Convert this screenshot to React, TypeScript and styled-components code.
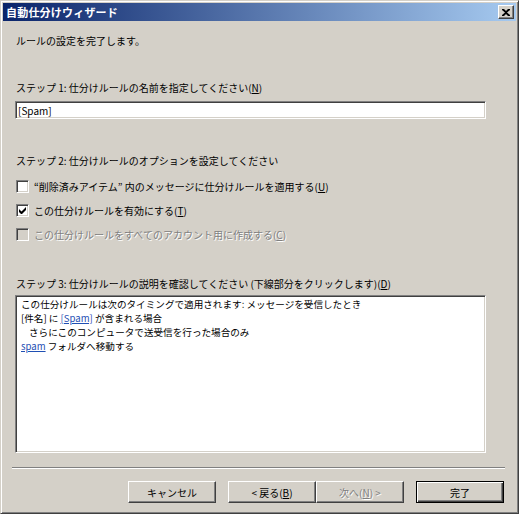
import React from 'react';
import styled, { createGlobalStyle } from 'styled-components';

const Colors = {
  face: '#d4d0c8',
  highlight: '#ffffff',
  shadow: '#808080',
  darkShadow: '#404040',
  text: '#000000',
  disabled: '#808080',
  link: '#1f4fb4',
  titleFrom: '#0a246a',
  titleTo: '#a6caf0',
};

const GlobalStyle = createGlobalStyle`
  html, body {
    margin: 0;
    padding: 0;
    background: ${Colors.face};
  }
  body {
    font-family: 'Noto Sans CJK JP', 'Noto Sans', sans-serif;
    font-size: 10px;
    color: ${Colors.text};
  }
`;

const App = () => {
  return (
    <>
      <GlobalStyle />
      <Window>
        <TitleBar>
          <Title>自動仕分けウィザード</Title>
          <CloseButton aria-label="閉じる">
            <svg width="8" height="7" viewBox="0 0 8 7">
              <path
                d="M0 0h2l2 2 2-2h2v1L5 3.5 8 6v1H6L4 5 2 7H0V6l3-2.5L0 1z"
                fill="#000"
              />
            </svg>
          </CloseButton>
        </TitleBar>

        <Content>
          <Label $top={13}>ルールの設定を完了します。</Label>

          <Label $top={33}>
            ステップ 1: 仕分けルールの名前を指定してください(<Key>N</Key>)
          </Label>
          <TextBox defaultValue="[Spam]" />

          <Label $top={35}>ステップ 2: 仕分けルールのオプションを設定してください</Label>
          <Options>
            <Option>
              <Box />
              <span>
                “削除済みアイテム” 内のメッセージに仕分けルールを適用する(<Key>U</Key>)
              </span>
            </Option>
            <Option>
              <Box>
                <svg width="7" height="7" viewBox="0 0 7 7">
                  <path d="M0 2v3l2 2h1l4-4V0L2.5 4.5z" fill="#000" />
                </svg>
              </Box>
              <span>
                この仕分けルールを有効にする(<Key>T</Key>)
              </span>
            </Option>
            <Option $disabled>
              <Box $disabled />
              <span>
                この仕分けルールをすべてのアカウント用に作成する(<Key>C</Key>)
              </span>
            </Option>
          </Options>

          <Label $top={31}>
            ステップ 3: 仕分けルールの説明を確認してください (下線部分をクリックします)(<Key>D</Key>)
          </Label>
          <Description>
            <Line>この仕分けルールは次のタイミングで適用されます: メッセージを受信したとき</Line>
            <Line>
              [件名] に <Link>[Spam]</Link> が含まれる場合
            </Line>
            <Line $indent>さらにこのコンピュータで送受信を行った場合のみ</Line>
            <Line>
              <Link>spam</Link> フォルダへ移動する
            </Line>
          </Description>
        </Content>

        <Separator />

        <ButtonRow>
          <Button>キャンセル</Button>
          <ButtonPair>
            <Button>
              &lt; 戻る(<Key>B</Key>)
            </Button>
            <Button disabled>
              次へ(<Key>N</Key>) &gt;
            </Button>
          </ButtonPair>
          <Button $default>完了</Button>
        </ButtonRow>
      </Window>
    </>
  );
};

const Window = styled.div`
  width: 519px;
  height: 514px;
  box-sizing: border-box;
  display: flex;
  flex-flow: column;
  background: ${Colors.face};
  border: 1px solid;
  border-color: ${Colors.face} ${Colors.darkShadow} ${Colors.darkShadow} ${Colors.face};
  box-shadow: inset 1px 1px ${Colors.highlight}, inset -1px -1px ${Colors.shadow};
  padding: 2px;
`;

const TitleBar = styled.div`
  height: 18px;
  flex-shrink: 0;
  display: flex;
  align-items: center;
  padding: 0 2px 0 3px;
  background: linear-gradient(to right, ${Colors.titleFrom}, ${Colors.titleTo});
`;

const Title = styled.div`
  color: #fff;
  font-weight: bold;
  font-size: 11px;
  letter-spacing: 0.2px;
  line-height: 18px;
`;

const CloseButton = styled.div`
  margin-left: auto;
  width: 16px;
  height: 14px;
  box-sizing: border-box;
  display: flex;
  align-items: center;
  justify-content: center;
  background: ${Colors.face};
  border: 1px solid;
  border-color: ${Colors.highlight} ${Colors.darkShadow} ${Colors.darkShadow} ${Colors.highlight};
  box-shadow: inset -1px -1px ${Colors.shadow};
`;

const Content = styled.div`
  display: flex;
  flex-flow: column;
  padding: 0 0 0 12px;
`;

const Label = styled.div<{ $top: number }>`
  margin-top: ${(p) => p.$top}px;
  margin-left: 1px;
  line-height: 14px;
  height: 14px;
  white-space: nowrap;
`;

const Key = styled.span`
  text-decoration: underline;
`;

const sunken = `
  box-sizing: border-box;
  border: 1px solid;
  border-color: ${Colors.shadow} ${Colors.highlight} ${Colors.highlight} ${Colors.shadow};
  box-shadow: inset 1px 1px ${Colors.darkShadow}, inset -1px -1px ${Colors.face};
`;

const TextBox = styled.input`
  ${sunken}
  margin-top: 6px;
  width: 471px;
  height: 18px;
  padding: 0 0 0 2px;
  background: #fff;
  font: inherit;
  color: ${Colors.text};
  outline: none;
`;

const Options = styled.div`
  margin-top: 6px;
  display: flex;
  flex-flow: column;
`;

const Option = styled.label<{ $disabled?: boolean }>`
  height: 24px;
  display: flex;
  align-items: center;
  gap: 5px;
  padding-left: 1px;
  white-space: nowrap;
  color: ${(p) => (p.$disabled ? Colors.disabled : Colors.text)};
  text-shadow: ${(p) => (p.$disabled ? `1px 1px 0 ${Colors.highlight}` : 'none')};
`;

const Box = styled.span<{ $disabled?: boolean }>`
  ${sunken}
  width: 13px;
  height: 13px;
  flex-shrink: 0;
  display: flex;
  align-items: center;
  justify-content: center;
  background: ${(p) => (p.$disabled ? Colors.face : '#fff')};
`;

const Description = styled.div`
  ${sunken}
  margin-top: 4px;
  width: 471px;
  height: 158px;
  padding: 2px 5px;
  background: #fff;
  font-size: 9.6px;
`;

const Line = styled.div<{ $indent?: boolean }>`
  line-height: 13.9px;
  height: 13.9px;
  white-space: nowrap;
  padding-left: ${(p) => (p.$indent ? 8 : 0)}px;
`;

const Link = styled.span`
  color: ${Colors.link};
  text-decoration: underline;
`;

const Separator = styled.div`
  margin: 14px 11px 0 9px;
  border-top: 1px solid ${Colors.shadow};
  border-bottom: 1px solid ${Colors.highlight};
`;

const ButtonRow = styled.div`
  margin-top: 12px;
  padding-right: 12px;
  display: flex;
  justify-content: flex-end;
  gap: 12px;
`;

const ButtonPair = styled.div`
  display: flex;
`;

const Button = styled.button<{ $default?: boolean }>`
  width: 88px;
  height: 22px;
  padding: 0;
  box-sizing: border-box;
  font: inherit;
  color: ${Colors.text};
  background: ${Colors.face};
  border: 1px solid;
  border-color: ${(p) =>
    p.$default
      ? '#000'
      : `${Colors.highlight} ${Colors.darkShadow} ${Colors.darkShadow} ${Colors.highlight}`};
  box-shadow: ${(p) =>
    p.$default
      ? `inset 1px 1px ${Colors.highlight}, inset -1px -1px ${Colors.darkShadow}, inset -2px -2px ${Colors.shadow}`
      : `inset -1px -1px ${Colors.shadow}`};

  &:disabled {
    color: ${Colors.disabled};
    text-shadow: 1px 1px 0 ${Colors.highlight};
  }
`;

export default App;
